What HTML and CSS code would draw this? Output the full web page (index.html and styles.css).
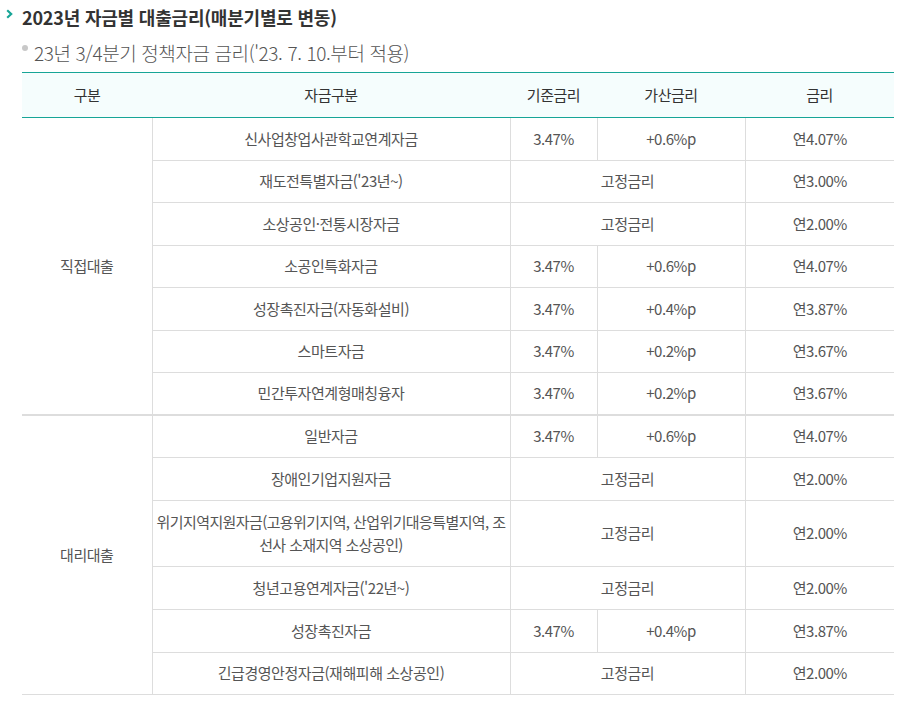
FILE: index.html
```html
<!DOCTYPE html>
<html lang="ko">
<head>
<meta charset="utf-8">
<title>2023년 자금별 대출금리</title>
<link rel="stylesheet" href="styles.css">
</head>
<body>
<div class="page">
  <h2 class="title">
    <svg class="chev" width="7" height="10" viewBox="0 0 7 10"><polyline points="1.2,1.2 5.2,5 1.2,8.8" fill="none" stroke="#17a597" stroke-width="2.2"/></svg>
    <span>2023년 자금별 대출금리(매분기별로 변동)</span>
  </h2>
  <p class="subtitle"><span class="dot"></span><span>23년 3/4분기 정책자금 금리('23. 7. 10.부터 적용)</span></p>
  <table class="rates">
    <colgroup>
      <col class="c1"><col class="c2"><col class="c3"><col class="c4"><col class="c5">
    </colgroup>
    <thead>
      <tr><th>구분</th><th>자금구분</th><th>기준금리</th><th>가산금리</th><th>금리</th></tr>
    </thead>
    <tbody>
      <tr><td rowspan="7" class="grp">직접대출</td><td class="name">신사업창업사관학교연계자금</td><td>3.47%</td><td>+0.6%p</td><td>연4.07%</td></tr>
      <tr><td class="name">재도전특별자금('23년~)</td><td colspan="2">고정금리</td><td>연3.00%</td></tr>
      <tr><td class="name">소상공인·전통시장자금</td><td colspan="2">고정금리</td><td>연2.00%</td></tr>
      <tr><td class="name">소공인특화자금</td><td>3.47%</td><td>+0.6%p</td><td>연4.07%</td></tr>
      <tr><td class="name">성장촉진자금(자동화설비)</td><td>3.47%</td><td>+0.4%p</td><td>연3.87%</td></tr>
      <tr><td class="name">스마트자금</td><td>3.47%</td><td>+0.2%p</td><td>연3.67%</td></tr>
      <tr><td class="name">민간투자연계형매칭융자</td><td>3.47%</td><td>+0.2%p</td><td>연3.67%</td></tr>
    </tbody>
    <tbody class="second">
      <tr><td rowspan="6" class="grp">대리대출</td><td class="name">일반자금</td><td>3.47%</td><td>+0.6%p</td><td>연4.07%</td></tr>
      <tr><td class="name">장애인기업지원자금</td><td colspan="2">고정금리</td><td>연2.00%</td></tr>
      <tr><td class="name tight">위기지역지원자금(고용위기지역, 산업위기대응특별지역, 조선사 소재지역 소상공인)</td><td colspan="2">고정금리</td><td>연2.00%</td></tr>
      <tr><td class="name">청년고용연계자금('22년~)</td><td colspan="2">고정금리</td><td>연2.00%</td></tr>
      <tr><td class="name">성장촉진자금</td><td>3.47%</td><td>+0.4%p</td><td>연3.87%</td></tr>
      <tr><td class="name">긴급경영안정자금(재해피해 소상공인)</td><td colspan="2">고정금리</td><td>연2.00%</td></tr>
    </tbody>
  </table>
</div>
</body>
</html>
```
FILE: styles.css
```css
html, body {
  margin: 0;
  padding: 0;
  background: #fff;
}
body {
  font-family: "Noto Sans CJK KR", "Noto Sans", sans-serif;
  color: #555;
}
.page {
  width: 900px;
}
.title {
  display: flex;
  align-items: center;
  gap: 9px;
  margin: 0;
  padding-left: 6px;
  height: 34px;
  font-size: 18px;
  font-weight: 700;
  color: #333;
  letter-spacing: -0.2px;
}
.chev {
  display: block;
  margin-top: -6px;
}
.subtitle {
  display: flex;
  align-items: center;
  gap: 6px;
  margin: 0;
  padding-left: 22px;
  height: 36px;
  font-size: 19px;
  font-weight: 300;
  color: #555;
  letter-spacing: -0.4px;
}
.dot {
  width: 6px;
  height: 6px;
  border-radius: 50%;
  background: #c8c8c8;
  margin-top: -8px;
}
.rates {
  margin: 2px 0 0 22px;
  width: 872px;
  table-layout: fixed;
  border-collapse: collapse;
  font-size: 15px;
  letter-spacing: -0.45px;
}
.c1 { width: 130px; }
.c2 { width: 358px; }
.c3 { width: 87px; }
.c4 { width: 148px; }
.c5 { width: 149px; }
.rates thead tr {
  height: 45px;
}
.rates th {
  background: #f5fdfd;
  border-top: 1px solid #17a597;
  border-bottom: 1px solid #17a597;
  padding: 0 4px;
  line-height: 22px;
  font-weight: 400;
  color: #333;
  text-align: center;
}
.rates tbody tr {
  height: 42.5px;
}
.rates tbody.second tr {
  height: 42.8px;
}
.rates td {
  border-bottom: 1px solid #dddddd;
  border-left: 1px solid #dddddd;
  padding: 0 4px;
  line-height: 22.5px;
  text-align: center;
  vertical-align: middle;
  color: #555;
}
.rates td.tight {
  padding: 10px 1px;
  letter-spacing: -0.6px;
}
.rates td.grp {
  border-left: none;
}
.second tr:first-child td {
  border-top: 2px solid #dddddd;
}
```
